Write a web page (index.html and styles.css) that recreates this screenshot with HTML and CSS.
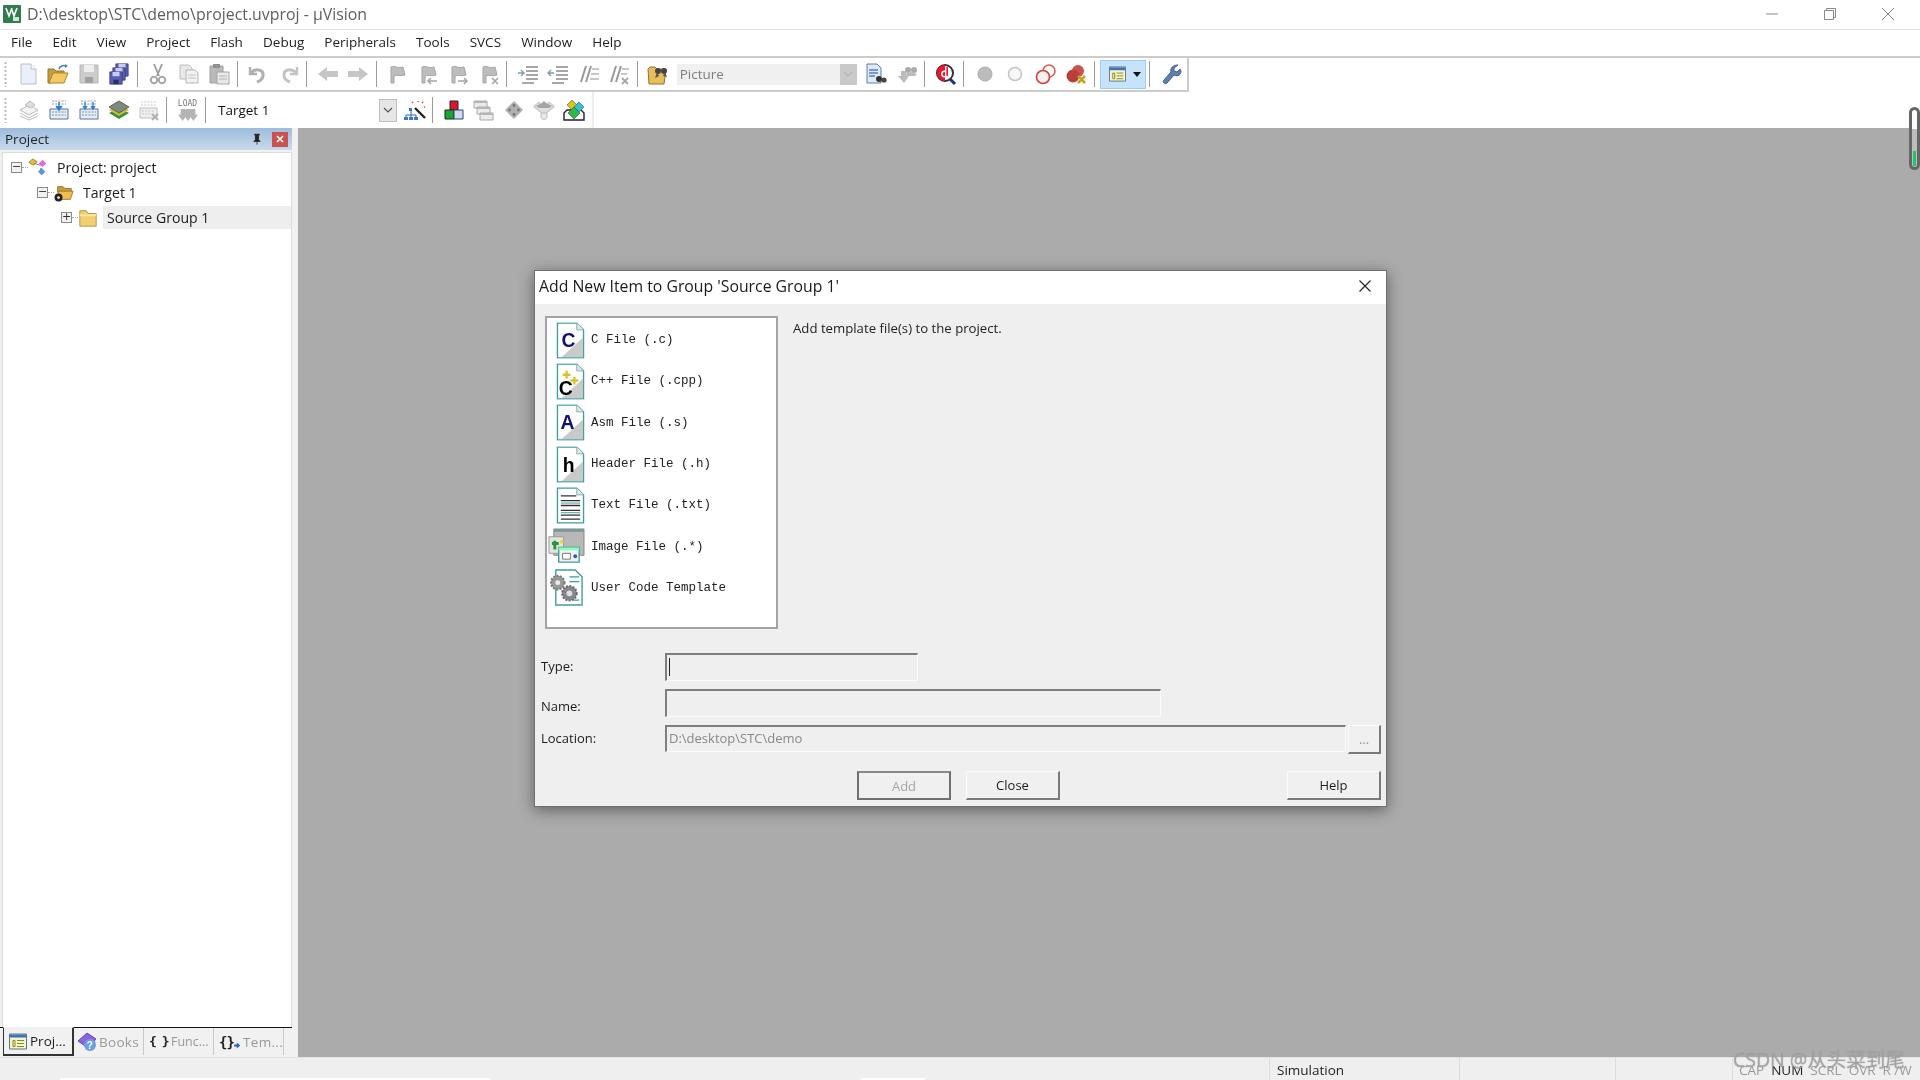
FILE: index.html
```html
<!DOCTYPE html>
<html lang="en">
<head>
<meta charset="utf-8">
<title>project.uvproj - µVision</title>
<link rel="stylesheet" href="styles.css">
</head>
<body>
<svg class="defs" width="0" height="0">
  <defs>
    <symbol id="doc" viewBox="0 0 30 38"><path d="M1.5 1h20l7 7v29h-27z" fill="#fff" stroke="#3f9d9a" stroke-width="1.4"/><path d="M21.5 1v7h7" fill="#dfe8e8" stroke="#8aa" stroke-width="1"/><path d="M28 16v20H6z" fill="#c9c9c9"/></symbol>
    <symbol id="flag" viewBox="0 0 22 22"><path d="M5 20V4c4-2 6 2 12 0l2 8c-5 2-7-1-11 1v7z" fill="#bdbdbd" stroke="#a5a5a5"/></symbol>
    <symbol id="lines" viewBox="0 0 22 22"><path d="M9 4h12M9 8h12M9 12h12M9 16h12M5 20h12" stroke="#8b8b8b" stroke-width="1.6"/></symbol>
    <symbol id="disk" viewBox="0 0 16 16"><path d="M1 1h14v14H1z" fill="#5a60ad" stroke="#363a80"/><path d="M4 1h8v5H4z" fill="#c9cdf0"/><path d="M5 10h6v5H5z" fill="#2c2f66"/></symbol>
  </defs>
</svg>
<div class="app">
  <header class="titlebar">
    <svg class="app-logo" viewBox="0 0 18 18"><rect width="18" height="18" rx="1" fill="#2f7d4f"/><path d="M3 3l3 8 3-8M9 5l2 6 3-8" stroke="#fff" stroke-width="1.6" fill="none"/><path d="M10 16h6v-4h-6z" fill="#cfe8d6"/></svg>
    <span class="title-text">D:\desktop\STC\demo\project.uvproj - µVision</span>
    <div class="win-controls">
      <svg viewBox="0 0 14 14"><path d="M1 7h12" stroke="#888" stroke-width="1"/></svg>
      <svg viewBox="0 0 14 14"><path d="M1.5 3.5h9v9h-9zM3.5 3.5v-2h9v9h-2" fill="none" stroke="#888"/></svg>
      <svg viewBox="0 0 14 14"><path d="M1 1l12 12M13 1L1 13" stroke="#888"/></svg>
    </div>
  </header>

  <nav class="menubar">
    <span>File</span><span>Edit</span><span>View</span><span>Project</span><span>Flash</span><span>Debug</span><span>Peripherals</span><span>Tools</span><span>SVCS</span><span>Window</span><span>Help</span>
  </nav>

  <div class="toolbar tb1">
    <i class="grip"></i>
    <div class="btn"><svg viewBox="0 0 22 22"><path d="M4 1h10l5 5v15H4z" fill="#eaeff9" stroke="#b9c0ce"/><path d="M14 1v5h5" fill="#fff" stroke="#b9c0ce"/></svg></div>
    <div class="btn"><svg viewBox="0 0 22 22"><path d="M1 6h6l2 2h8v3H7l-3 9H1z" fill="#c79c3e" stroke="#94752c"/><path d="M6 10h15l-4 10H2z" fill="#f5c962" stroke="#a9842f"/><path d="M12 6c1-3 4-4 7-3" fill="none" stroke="#4d7db5" stroke-width="1.5"/><path d="M18 1l3 2-3 2z" fill="#4d7db5"/></svg></div>
    <div class="btn"><svg viewBox="0 0 22 22"><path d="M2 2h18v18H2z" fill="#cbcbcb" stroke="#b5b5b5"/><path d="M6 2h10v7H6z" fill="#efefef"/><path d="M7 14h8v6H7z" fill="#a0a0a0"/></svg></div>
    <div class="btn"><svg viewBox="0 0 22 22"><use href="#disk" x="7" y="0" width="14" height="14"/><use href="#disk" x="4" y="4" width="14" height="14"/><use href="#disk" x="1" y="8" width="14" height="14"/></svg></div>
    <i class="sep"></i>
    <div class="btn"><svg viewBox="0 0 22 22"><path d="M7 1l5 12M15 1l-5 12" stroke="#9c9c9c" stroke-width="1.8"/><circle cx="7" cy="17" r="3.2" fill="none" stroke="#a8a8a8" stroke-width="2"/><circle cx="15" cy="17" r="3.2" fill="none" stroke="#a8a8a8" stroke-width="2"/></svg></div>
    <div class="btn"><svg viewBox="0 0 22 22"><path d="M2 2h9l3 3v11H2z" fill="#e8e8e8" stroke="#bcbcbc"/><path d="M8 7h9l3 3v10H8z" fill="#f2f2f2" stroke="#b5b5b5"/><path d="M10 12h8M10 15h8" stroke="#c2c2c2"/></svg></div>
    <div class="btn"><svg viewBox="0 0 22 22"><path d="M2 3h13v17H2z" fill="#b9b9b9" stroke="#9e9e9e"/><path d="M5 1h7v4H5z" fill="#8f8f8f"/><path d="M9 9h12v12H9z" fill="#e9e9e9" stroke="#a5a5a5"/><path d="M11 13h8M11 16h8" stroke="#b5b5b5"/></svg></div>
    <i class="sep"></i>
    <div class="btn"><svg viewBox="0 0 22 22"><path d="M3 4v7h7" fill="none" stroke="#b0b0b0" stroke-width="2.4"/><path d="M4 10c4-5 13-4 12 3-.5 3-3 5-6 6" fill="none" stroke="#b0b0b0" stroke-width="3"/></svg></div>
    <div class="btn"><svg viewBox="0 0 22 22"><path d="M19 4v7h-7" fill="none" stroke="#c4c4c4" stroke-width="2.4"/><path d="M18 10c-4-5-13-4-12 3 .5 3 3 5 6 6" fill="none" stroke="#c4c4c4" stroke-width="3"/></svg></div>
    <i class="sep"></i>
    <div class="btn"><svg viewBox="0 0 22 22"><path d="M1 11l9-7v4h11v6H10v4z" fill="#c6c6c6"/></svg></div>
    <div class="btn"><svg viewBox="0 0 22 22"><path d="M21 11l-9-7v4H1v6h11v4z" fill="#c6c6c6"/></svg></div>
    <i class="sep"></i>
    <div class="btn"><svg viewBox="0 0 22 22"><use href="#flag"/></svg></div>
    <div class="btn"><svg viewBox="0 0 22 22"><use href="#flag"/><path d="M20 18H11m3-3l-3 3 3 3" fill="none" stroke="#a5a5a5" stroke-width="1.6"/></svg></div>
    <div class="btn"><svg viewBox="0 0 22 22"><use href="#flag"/><path d="M11 18h9m-3-3l3 3-3 3" fill="none" stroke="#a5a5a5" stroke-width="1.6"/></svg></div>
    <div class="btn"><svg viewBox="0 0 22 22"><use href="#flag"/><path d="M14 15l6 6m0-6l-6 6" stroke="#a5a5a5" stroke-width="1.6"/></svg></div>
    <i class="sep"></i>
    <div class="btn"><svg viewBox="0 0 22 22"><use href="#lines"/><path d="M1 10h6m-3-3l3 3-3 3" fill="none" stroke="#7f9bb8" stroke-width="1.4"/></svg></div>
    <div class="btn"><svg viewBox="0 0 22 22"><use href="#lines"/><path d="M7 10H1m3-3l-3 3 3 3" fill="none" stroke="#7f9bb8" stroke-width="1.4"/></svg></div>
    <div class="btn"><svg viewBox="0 0 22 22"><path d="M3 19L8 3M8 19l5-16" stroke="#999" stroke-width="2"/><path d="M14 6h7M13 11h8M12 16h9" stroke="#b5b5b5" stroke-width="1.5"/></svg></div>
    <div class="btn"><svg viewBox="0 0 22 22"><path d="M3 19L8 3M8 19l5-16" stroke="#999" stroke-width="2"/><path d="M14 6h7M13 11h6" stroke="#b5b5b5" stroke-width="1.5"/><path d="M14 15l6 6m0-6l-6 6" stroke="#a5a5a5" stroke-width="1.8"/></svg></div>
    <i class="sep"></i>
    <div class="btn"><svg viewBox="0 0 22 22"><path d="M1 6l2-2h5l2 2h9l-2 15H2z" fill="#e9bd57" stroke="#8f7430"/><circle cx="11" cy="8" r="3" fill="#444"/><circle cx="17" cy="8" r="3" fill="#444"/><path d="M10 9l-2 6 4-2M18 9l2 5-4-1" fill="#555"/></svg></div>
    <div class="combo combo-off"><span>Picture</span><b class="drop off"><svg viewBox="0 0 10 6"><path d="M1 1l4 4 4-4" fill="none" stroke="#a8a8a8"/></svg></b></div>
    <div class="btn"><svg viewBox="0 0 22 22"><path d="M2 1h10l4 4v15H2z" fill="#dfe9f8" stroke="#5d7fae"/><path d="M4 7h9M4 10h9M4 13h6" stroke="#4f7fc4" stroke-width="1.3"/><circle cx="14" cy="16" r="3" fill="#333"/><circle cx="19" cy="17" r="2.6" fill="#444"/></svg></div>
    <div class="btn"><svg viewBox="0 0 22 22"><path d="M2 13h3V8h5v5h3l-5 7z" fill="#bcbcbc"/><circle cx="12" cy="7" r="3" fill="#aaa"/><circle cx="18" cy="7" r="3" fill="#aaa"/><path d="M9 11l6-2 6 2-2 2h-8z" fill="#bbb"/></svg></div>
    <i class="sep"></i>
    <div class="btn"><svg viewBox="0 0 22 22"><path d="M14 15l6 6" stroke="#1c2f94" stroke-width="3"/><circle cx="10" cy="10" r="8" fill="#fff" stroke="#333" stroke-width="2"/><path d="M10 2a8 8 0 0 0 0 16z" fill="#f0142a"/><circle cx="9.5" cy="11" r="2.7" fill="none" stroke="#fff" stroke-width="1.5"/><path d="M12.2 4v9" stroke="#f0142a" stroke-width="1.6"/></svg></div>
    <i class="sep"></i>
    <div class="btn"><svg viewBox="0 0 22 22"><circle cx="11" cy="11" r="7" fill="#bcbcbc" stroke="#aaa"/></svg></div>
    <div class="btn"><svg viewBox="0 0 22 22"><circle cx="11" cy="11" r="6.5" fill="#f7f7f7" stroke="#c4c4c4" stroke-width="1.5"/></svg></div>
    <div class="btn"><svg viewBox="0 0 22 22"><circle cx="14" cy="8" r="6" fill="#fff" stroke="#d85c55" stroke-width="1.6"/><circle cx="8" cy="14" r="6.5" fill="#fbeeee" stroke="#d0403a" stroke-width="1.6"/></svg></div>
    <div class="btn"><svg viewBox="0 0 22 22"><circle cx="13" cy="8" r="6" fill="#c9534c"/><circle cx="8" cy="13" r="6.5" fill="#b8403c"/><path d="M13 13l7 7m0-7l-7 7" stroke="#c4a21f" stroke-width="2.6"/></svg></div>
    <i class="sep"></i>
    <div class="btn-active">
      <svg class="pane-ic" viewBox="0 0 18 16"><path d="M.5.5h17v15H.5z" fill="#f4f3cf" stroke="#5f7489"/><path d="M1 1h16v3H1z" fill="#3f72b6"/><path d="M4 7h2v6H4zM8 7h7M8 10h7M8 13h7" stroke="#8a8a16" fill="none"/></svg>
      <svg class="caret" viewBox="0 0 8 5"><path d="M0 0h8L4 5z" fill="#111"/></svg>
    </div>
    <i class="sep sep-tight"></i>
    <div class="btn"><svg viewBox="0 0 22 22"><path d="M18 2l-4 3v3l3 1 3-3 1 2c0 4-3 6-7 4L7 20c-2 2-5-1-3-3l7-8c-1-4 2-7 7-7z" fill="#5f82ad" stroke="#3f5f88"/></svg></div>
  </div>

  <div class="toolbar tb2">
    <i class="grip"></i>
    <div class="btn"><svg viewBox="0 0 22 22"><path d="M2 11l9-5 9 5-9 5z" fill="#f2f2f2" stroke="#bbb"/><path d="M2 14l9 5 9-5M2 17l9 4 9-4" fill="none" stroke="#bdbdbd"/><path d="M7 6l5-4 5 4-5 3z" fill="#ddd" stroke="#bbb"/></svg></div>
    <div class="btn"><svg viewBox="0 0 22 22"><path d="M2 10h18v10H2z" fill="#e5edf6" stroke="#5a7396"/><path d="M4 13h14M4 16h14" stroke="#7b8da6" stroke-dasharray="2 1.2"/><path d="M4 2h14M4 5h14" stroke="#8b9bb3" stroke-dasharray="2 1.2"/><path d="M11 3v6m-3-2l3 4 3-4" fill="#2c7fd6" stroke="#2c7fd6" stroke-width="1.4"/></svg></div>
    <div class="btn"><svg viewBox="0 0 22 22"><path d="M2 10h18v10H2z" fill="#e5edf6" stroke="#5a7396"/><path d="M4 13h14M4 16h14" stroke="#7b8da6" stroke-dasharray="2 1.2"/><path d="M3 2h16M3 5h16" stroke="#8b9bb3" stroke-dasharray="2 1.2"/><path d="M7 3v6m-2-2l2 3 2-3M15 3v6m-2-2l2 3 2-3" fill="#2c7fd6" stroke="#2c7fd6" stroke-width="1.3"/></svg></div>
    <div class="btn"><svg viewBox="0 0 22 22"><path d="M1 14l10 6 10-6-10-5z" fill="#3d8f3d"/><path d="M1 11l10 6 10-6-10-5z" fill="#c8bf3a"/><path d="M1 8l10 6 10-6-10-6z" fill="#7f8a7f" stroke="#5c665c"/></svg></div>
    <div class="btn"><svg viewBox="0 0 22 22"><path d="M2 9h17v10H2z" fill="#f0f0f0" stroke="#bdbdbd"/><path d="M4 12h13M4 15h13M3 3h15M3 6h15" stroke="#c5c5c5" stroke-dasharray="2 1.2"/><path d="M14 15l6 6m0-6l-6 6" stroke="#b0b0b0" stroke-width="2"/></svg></div>
    <i class="sep"></i>
    <div class="btn btn-load"><span class="load-txt">LOAD</span><svg viewBox="0 0 22 13"><path d="M3 0h16v6h3l-5 7-3-4-3 4-3-4-3 4-5-7h3z" fill="#b4b4b4"/></svg></div>
    <i class="sep"></i>
    <div class="combo combo-target"><span>Target 1</span><b class="drop on"><svg viewBox="0 0 10 6"><path d="M1 1l4 4 4-4" fill="none" stroke="#555" stroke-width="1.2"/></svg></b></div>
    <div class="btn"><svg viewBox="0 0 22 22"><path d="M11 9l10 10" stroke="#222" stroke-width="2.4"/><path d="M14 2v1M19 3l-1 1M8 3l1 1M21 8h-1" stroke="#d8413a" stroke-width="1.6"/><path d="M7 10v5M2 16h10M2 16v2M12 16v2M7 15v3" stroke="#2e63b3" fill="none"/><path d="M5 9h3v3H5zM0 18h4v3H0zM5 18h4v3H5zM10 18h4v3h-4z" fill="#3b76c8"/></svg></div>
    <i class="sep"></i>
    <div class="btn"><svg viewBox="0 0 22 22"><path d="M7 2h8v9H7z" fill="#d7182a" stroke="#222"/><path d="M2 11h9v9H2z" fill="#17a834" stroke="#222"/><path d="M11 11h9v9h-9z" fill="#d5dce6" stroke="#224a8c"/></svg></div>
    <div class="btn"><svg viewBox="0 0 22 22"><path d="M1 2h13v7H1zM4 8h13v7H4zM7 14h13v7H7z" fill="#ececec" stroke="#aaa"/><path d="M1 2h13v2H1zM4 8h13v2H4zM7 14h13v2H7z" fill="#b5b5b5"/></svg></div>
    <div class="btn"><svg viewBox="0 0 22 22"><path d="M11 2l9 9-9 9-9-9z" fill="#b0b0b0"/><circle cx="11" cy="6.5" r="1.4" fill="#777"/><circle cx="6.5" cy="11" r="1.4" fill="#777"/><circle cx="15.5" cy="11" r="1.4" fill="#777"/><circle cx="11" cy="15.5" r="1.4" fill="#777"/></svg></div>
    <div class="btn"><svg viewBox="0 0 22 22"><path d="M1 8l10 8 10-8v-1l-5-4-2 3-3-4-3 4-2-3-5 4z" fill="#dedede" stroke="#c0c0c0"/><path d="M3 7l4-2 4-2 4 2 4 2-3 2H6z" fill="#a5a5a5"/><path d="M8 14h6v5l-3 2-3-2z" fill="#e6e6e6" stroke="#c0c0c0"/></svg></div>
    <div class="btn"><svg viewBox="0 0 22 22"><path d="M1 14l3-3h14l3 3v7H1z" fill="#fff" stroke="#222" stroke-width="1.4"/><path d="M9 1l5 5-5 5-5-5z" fill="#d8c51c" stroke="#555" stroke-width=".6"/><path d="M16 3l5 5-5 5-5-5z" fill="#2dc3dd" stroke="#555" stroke-width=".6"/><path d="M11 8l6 6-6 6-6-6z" fill="#2fb84a" stroke="#444" stroke-width=".6"/></svg></div>
  </div>

  <main class="main">
    <aside class="panel">
      <div class="panel-head">
        <span>Project</span>
        <svg class="pin" viewBox="0 0 10 14"><path d="M2 1h6v1H7v6l2 2H1l2-2V2H2zM5 10v4" fill="#222" stroke="#222"/></svg>
        <div class="panel-x"><svg viewBox="0 0 8 8"><path d="M1 1l6 6M7 1L1 7" stroke="#fff" stroke-width="1.6"/></svg></div>
      </div>
      <div class="tree">
        <div class="row lv0"><i class="exp">−</i><i class="dots"></i>
          <svg class="tree-ic" viewBox="0 0 22 22"><path d="M1 5l4-4 5 3-4 4z" fill="#e8b93a" stroke="#a8841c"/><path d="M12 6l4-4 4 4-4 4z" fill="#e667d8"/><path d="M11 15l4-4 4 4-4 4z" fill="#5a97e0"/><path d="M7 6l7 2m0 3v2" stroke="#777"/></svg>
          <span class="lbl">Project: project</span></div>
        <div class="row lv1"><i class="exp">−</i><i class="dots"></i>
          <svg class="tree-ic" viewBox="0 0 22 22"><path d="M4 4h6l2 2h7v4H4z" fill="#c79c3e" stroke="#8f7430"/><path d="M5 9h16l-3 9H3z" fill="#f0bd50" stroke="#9e7a2a"/><circle cx="5" cy="16" r="4.4" fill="#222"/><circle cx="5" cy="16" r="1.5" fill="#eee"/></svg>
          <span class="lbl">Target 1</span></div>
        <div class="row lv2"><i class="exp">+</i><i class="dots"></i>
          <svg class="tree-ic" viewBox="0 0 22 22"><path d="M2 3h7l2 3h9v14H2z" fill="#f4cf72" stroke="#b18f3c"/><path d="M2 7h18v2H2z" fill="#fbe7ae"/></svg>
          <span class="lbl sel">Source Group 1</span></div>
      </div>
      <div class="tabs">
        <div class="tab active"><svg class="tab-ic" viewBox="0 0 18 16"><path d="M.5.5h17v15H.5z" fill="#f4f3cf" stroke="#5f7489"/><path d="M1 1h16v3H1z" fill="#3f72b6"/><path d="M4 7h2v6H4zM8 7h7M8 10h7M8 13h7" stroke="#8a8a16" fill="none"/></svg><span>Proj...</span></div>
        <div class="tab t-books"><svg class="tab-ic" viewBox="0 0 20 20"><path d="M1 9l9-8 9 6-8 9z" fill="#8a63dd" stroke="#6b45c0"/><circle cx="13" cy="13" r="6" fill="#6c9fe0"/><text x="13" y="16.5" class="q">?</text></svg><span>Books</span></div>
        <div class="tab t-func"><b class="brace">{ }</b><span>Func...</span></div>
        <div class="tab t-tem"><b class="brace">{}</b><svg class="arrow" viewBox="0 0 9 9"><path d="M0 3h4V0l5 4.5L4 9V6H0z" fill="#2a62c8"/></svg><span>Tem...</span></div>
      </div>
    </aside>
    <div class="workspace"></div>
  </main>

  <footer class="status">
    <div class="st-cell st-a"></div>
    <div class="st-cell st-sim">Simulation</div>
    <div class="st-cell st-b"></div>
    <div class="st-cell st-c"></div>
    <div class="st-keys"><span>CAP</span><span class="on">NUM</span><span>SCRL</span><span>OVR</span><span>R /W</span></div>
  </footer>

  <div class="overlay-scroll"><i></i></div>
  <div class="watermark">CSDN @从头菜到尾</div>

  <section class="dialog">
    <div class="dlg-title">
      <span>Add New Item to Group 'Source Group 1'</span>
      <svg viewBox="0 0 14 14"><path d="M1.5 1.5l11 11M12.5 1.5l-11 11" stroke="#222" stroke-width="1.1"/></svg>
    </div>
    <div class="dlg-body">
      <div class="dlg-top">
        <ul class="items">
          <li><span class="fi"><svg viewBox="0 0 30 38"><use href="#doc"/><text x="13" y="26" class="big c-navy">C</text></svg></span><span>C File (.c)</span></li>
          <li><span class="fi"><svg viewBox="0 0 30 38"><use href="#doc"/><text x="10" y="33" class="big">C</text><path d="M11 8v8M7 12h8M19 14v8M15 18h8" stroke="#d7c22a" stroke-width="2.4"/></svg></span><span>C++ File (.cpp)</span></li>
          <li><span class="fi"><svg viewBox="0 0 30 38"><use href="#doc"/><text x="12" y="26" class="big c-navy">A</text></svg></span><span>Asm File (.s)</span></li>
          <li><span class="fi"><svg viewBox="0 0 30 38"><use href="#doc"/><text x="13" y="27" class="big">h</text></svg></span><span>Header File (.h)</span></li>
          <li><span class="fi"><svg viewBox="0 0 30 38"><path d="M1.5 1h20l7 7v29h-27z" fill="#fff" stroke="#3f9d9a" stroke-width="1.4"/><path d="M21.5 1v7h7" fill="#dfe8e8" stroke="#8aa"/><path d="M5 9h16M5 14h20M5 19h20M5 24h20M5 29h20M5 33h20" stroke="#333" stroke-width="1.3"/><path d="M5 16.500h20M5 26.500h20" stroke="#3f9d9a"/></svg></span><span>Text File (.txt)</span></li>
          <li><span class="fi fi-wide"><svg viewBox="0 0 38 38"><path d="M6 1h31v27H6z" fill="#b8b8b8" stroke="#888"/><path d="M6 1h31v3H6z" fill="#7a9a9a"/><path d="M1 9h15v17H1z" fill="#dfe6df" stroke="#999"/><path d="M7 22v-9m-3 3h7" stroke="#2f8f3f" stroke-width="3"/><circle cx="14" cy="14" r="2" fill="#e6d640"/><path d="M11 20h21v15H11z" fill="#f2f2f2" stroke="#3f9d9a" stroke-width="1.4"/><path d="M11 20h21v3H11z" fill="#8fb"/><path d="M15 26h8v6h-8z" fill="#fff" stroke="#777"/><circle cx="28" cy="29" r="2" fill="#3a55c4"/></svg></span><span>Image File (.*)</span></li>
          <li><span class="fi fi-wide"><svg viewBox="0 0 38 38"><path d="M8 1h20l7 7v29H8z" fill="#fff" stroke="#3f9d9a" stroke-width="1.4"/><path d="M22 8h10M22 13h10M26 32h6" stroke="#3f9d9a" stroke-width="1.3"/><circle cx="10" cy="14" r="7" fill="#999" stroke="#777" stroke-width="2" stroke-dasharray="2 1.500"/><circle cx="10" cy="14" r="2.500" fill="#eee"/><circle cx="22" cy="25" r="7.500" fill="#888" stroke="#667" stroke-width="2" stroke-dasharray="2 1.500"/><circle cx="22" cy="25" r="3" fill="#dde"/></svg></span><span>User Code Template</span></li>
        </ul>
        <p class="desc">Add template file(s) to the project.</p>
      </div>
      <div class="form">
        <label class="l-type">Type:</label><div class="field f-type"><i class="text-caret"></i></div>
        <label class="l-name">Name:</label><div class="field f-name"></div>
        <label class="l-loc">Location:</label>
        <div class="loc-row"><div class="field f-loc">D:\desktop\STC\demo</div><div class="dlg-btn dots-btn">...</div></div>
      </div>
      <div class="actions">
        <div class="dlg-btn default disabled">Add</div>
        <div class="dlg-btn">Close</div>
        <div class="dlg-btn help">Help</div>
      </div>
    </div>
  </section>
</div>
</body>
</html>
```

FILE: styles.css
```css
* { box-sizing: border-box; }
html, body { margin: 0; padding: 0; background: #fff; }
body { font-family: "Open Sans", "Noto Sans", sans-serif; color: #1c1c1c; overflow: hidden; }
.defs { position: absolute; }
i { font-style: normal; display: block; }

.app { position: relative; width: 1920px; height: 1080px; display: flex; flex-direction: column; overflow: hidden; background: #fff; filter: blur(.35px); }

/* title */
.titlebar { height: 30px; flex: none; display: flex; align-items: center; padding: 0 0 2px 3px; border-bottom: 1px solid #e3e3e3; }
.app-logo { width: 18px; height: 20px; margin-right: 6px; }
.title-text { font-size: 15.900px; color: #5e5e5e; }
.win-controls { margin-left: auto; display: flex; gap: 44px; padding-right: 25px; }
.win-controls svg { width: 14px; height: 14px; display: block; }

/* menu */
.menubar { height: 28px; flex: none; display: flex; align-items: center; padding: 0 0 2px 1px; border-bottom: 2px solid #ccc; font-size: 13.500px; color: #222; }
.menubar span { padding: 0 10.050px; }

/* toolbars */
.toolbar { flex: none; display: flex; align-items: center; background: #fff; }
.tb1 { width: 1189px; height: 34px; border-right: 2px solid #ccc; border-bottom: 2px solid #ccc; padding-left: 3px; }
.tb2 { width: 594px; height: 36px; border-right: 2px solid #eee; padding-left: 3px; }
.grip { width: 3px; height: 26px; margin: 0 5.250px 0 1px; background: radial-gradient(circle, #b5b5b5 1px, transparent 1.200px) 0 0 / 3px 4px; flex: none; }
.tb2 .grip { margin-right: 6.500px; }
.btn { width: 30.500px; height: 26px; flex: none; display: flex; align-items: center; justify-content: center; }
.tb2 .btn { width: 30px; }
.btn svg { width: 22px; height: 22px; display: block; }
.sep { width: 1px; height: 26px; background: #9a9a9a; margin: 0 5px 0 2.500px; flex: none; }
.tb2 .sep { margin: 0 6px 0 2px; }
.sep-tight { margin: 0 6px 0 3px; }
.combo { display: flex; align-items: center; flex: none; font-size: 13.500px; }
.combo-off { width: 180px; height: 21px; margin-left: 3.500px; margin-right: 4px; background: #f0f0f0; padding-left: 3px; color: #7f7f7f; }
.combo-target { width: 185.500px; height: 23px; margin-right: 3px; color: #111; padding-left: 6.500px; }
.drop { margin-left: auto; display: flex; align-items: center; justify-content: center; height: 100%; width: 17px; font-weight: normal; }
.drop svg { width: 10px; height: 6px; display: block; }
.drop.off { background: #c9c9c9; }
.drop.on { background: #e6e6e6; border: 1px solid #bdbdbd; width: 18px; }
.btn-active { width: 46px; height: 29px; flex: none; background: #c6e3fb; border: 1px solid #9ccdf5; display: flex; align-items: center; padding-left: 8px; gap: 7px; }
.pane-ic { width: 17px; height: 16px; }
.caret { width: 8px; height: 5px; }
.btn-load { flex-direction: column; gap: 0; }
.btn-load svg { width: 20px; height: 12px; }
.load-txt { font-family: "DejaVu Sans Mono", monospace; font-size: 8px; line-height: 10px; color: #777; }

/* main */
.main { flex: 1; display: flex; min-height: 0; }
.panel { width: 298px; flex: none; display: flex; flex-direction: column; background: #f1f1f1; }
.panel-head { height: 22px; flex: none; width: 292px; display: flex; align-items: center; padding-left: 5px; font-size: 13.500px; color: #222; background: linear-gradient(#9dbcdc, #c9dbec); }
.pin { width: 8px; height: 12px; margin-left: auto; }
.panel-x { width: 16px; height: 15px; background: #c9514f; margin: 0 4px 0 11px; display: flex; align-items: center; justify-content: center; }
.panel-x svg { width: 8px; height: 8px; display: block; }
.tree { flex: 1; width: 290px; margin: 2px 0 0 2px; background: #fff; border: 1px solid #dcdcdc; border-bottom: 0; padding-top: 2px; font-size: 14.100px; color: #1c1c1c; }
.row { height: 25px; display: flex; align-items: center; }
.lv0 { padding-left: 8px; }
.lv1 { padding-left: 34px; }
.lv2 { padding-left: 58px; }
.exp { width: 11px; height: 11px; flex: none; border: 1px solid #8b8b8b; background: #f1f1f1; font-size: 11px; line-height: 8px; text-align: center; color: #333; font-family: "DejaVu Sans", sans-serif; }
.dots { width: 6px; border-top: 1px dotted #aaa; flex: none; }
.tree-ic { width: 20px; height: 20px; flex: none; margin-right: 5px; }
.lbl { padding-left: 4px; line-height: 23px; }
.lbl.sel { flex: 1; background: #eee; height: 23px; }
.tabs { height: 30px; flex: none; width: 292px; display: flex; align-items: flex-start; padding-left: 3px; border-top: 1px solid #111; font-size: 13.500px; color: #999; letter-spacing: .3px; background: #f1f1f1; white-space: nowrap; }
.tab { height: 27px; display: flex; align-items: center; flex: none; border-right: 1px solid #c8c8c8; }
.tab.active { width: 71px; margin-top: -1px; height: 29px; background: #f1f1f1; border: 1px solid #333; border-top-color: #f1f1f1; border-right-width: 2px; border-bottom-width: 2px; color: #222; padding-left: 5px; gap: 3px; letter-spacing: 0; }
.tab-ic { width: 18px; height: 17px; flex: none; }
.t-books { width: 70px; padding-left: 3px; gap: 2px; }
.t-books .tab-ic { width: 20px; height: 20px; }
.q { font: bold 10px "Liberation Sans", sans-serif; fill: #fff; text-anchor: middle; }
.t-func { width: 70px; padding-left: 5px; gap: 3px; font-size: 12.500px; letter-spacing: 0; }
.t-func .brace { font-size: 13px; letter-spacing: -1.500px; }
.t-tem { width: 70px; padding-left: 5px; }
.brace { font-family: "DejaVu Sans Mono", monospace; font-size: 14px; color: #222; font-weight: bold; letter-spacing: -1px; }
.arrow { width: 9px; height: 9px; margin: 7px 3px 0 0; }
.workspace { flex: 1; background: #ababab; }

/* status */
.status { height: 23px; flex: none; display: flex; align-items: stretch; background: linear-gradient(#fff, #fff) 60px 100% / 430px 2px no-repeat, linear-gradient(#fff, #fff) 861px 100% / 64px 2px no-repeat, #efefef; border-top: 1px solid #e2e2e2; font-size: 13.500px; color: #222; }
.st-cell { border-right: 1px solid #ddd; display: flex; align-items: center; padding-top: 2px; }
.st-a { width: 1270px; }
.st-sim { width: 190px; padding-left: 7px; }
.st-b { width: 156px; }
.st-c { width: 117px; }
.st-keys { flex: 1; display: flex; color: #999; font-size: 13.500px; padding: 2px 0 0 6px; gap: 7px; align-items: center; white-space: nowrap; }
.st-keys .on { color: #222; }

.overlay-scroll { position: absolute; left: 1909px; top: 107px; width: 11px; height: 63px; border: 3px solid #666; border-radius: 6px; background: linear-gradient(#fff 33%, #bdbdbd 33%); }
.overlay-scroll i { position: absolute; left: 1px; bottom: 1px; width: 3px; height: 15px; background: #25c26e; }
.watermark { position: absolute; left: 1733px; top: 1048px; font-size: 19.500px; line-height: 24px; color: rgba(175, 175, 175, .6); text-shadow: 0 0 1px #8a8a8a; font-family: "Open Sans", "Noto Sans CJK SC", sans-serif; white-space: nowrap; }

/* dialog */
.dialog { position: absolute; left: 534px; top: 270px; width: 853px; height: 537px; display: flex; flex-direction: column; border: 1px solid #6f6f6f; box-shadow: 0 3px 14px rgba(0, 0, 0, .45); background: #efefef; }
.dlg-title { height: 33px; flex: none; display: flex; align-items: center; background: #fff; padding: 0 14px 3px 4px; font-size: 15.800px; color: #1a1a1a; }
.dlg-title svg { width: 14px; height: 14px; margin-left: auto; }
.dlg-body { flex: 1; display: flex; flex-direction: column; padding: 12px 5px 0 6px; }
.dlg-top { display: flex; padding-left: 4px; }
.items { list-style: none; margin: 0; padding: 1.500px 0 0; width: 233px; height: 313px; background: #fff; border: 2px solid #a3a3a3; font-family: "Liberation Mono", monospace; font-size: 12.500px; color: #222; }
.items li { height: 41.300px; display: flex; align-items: center; }
.fi { width: 29px; height: 37px; margin: 0 6px 0 9px; flex: none; display: block; }
.fi svg { width: 100%; height: 100%; display: block; overflow: visible; }
.fi-wide { width: 37px; margin: 0 6px 0 1px; }
.big { font: bold 20px "Liberation Sans", sans-serif; fill: #000; text-anchor: middle; }
.big.c-navy { fill: #11116e; }
.desc { margin: 3px 0 0 15px; font-size: 13.200px; line-height: 18px; color: #222; }
.form { display: grid; grid-template-columns: 124px 1fr; margin-top: 24px; font-size: 13px; row-gap: 8px; align-items: center; }
.l-type { margin-top: -2px; }
.l-name { margin-top: 5px; }
.field { height: 28px; background: #efefef; border: 2px solid #7e7e7e; border-right-color: #fafafa; border-bottom-color: #fafafa; border-right-width: 1px; border-bottom-width: 1px; }
.f-type { width: 253px; padding: 3px 0 0 2px; }
.text-caret { width: 1px; height: 18px; background: #222; }
.f-name { width: 496px; }
.f-loc { width: 681px; height: 27px; padding-left: 2px; font-size: 13px; color: #888; line-height: 23px; }
.loc-row { display: flex; gap: 2px; align-items: flex-start; }
.l-loc { margin-top: -3px; }
.dlg-btn { height: 29px; background: #f0f0f0; border: 1px solid #fbfbfb; border-right: 2px solid #7a7a7a; border-bottom: 2px solid #7a7a7a; display: flex; align-items: center; justify-content: center; font-size: 13px; color: #1c1c1c; }
.dots-btn { width: 33px; color: #999; }
.actions { display: flex; margin-top: 17px; padding-left: 316px; }
.actions .dlg-btn { width: 94px; }
.actions .dlg-btn + .dlg-btn { margin-left: 15px; }
.actions .help { margin-left: auto !important; }
.dlg-btn.default { border: 2px solid #6f6f6f; border-top-color: #888; }
.disabled { color: #a5a5a5; }
```
